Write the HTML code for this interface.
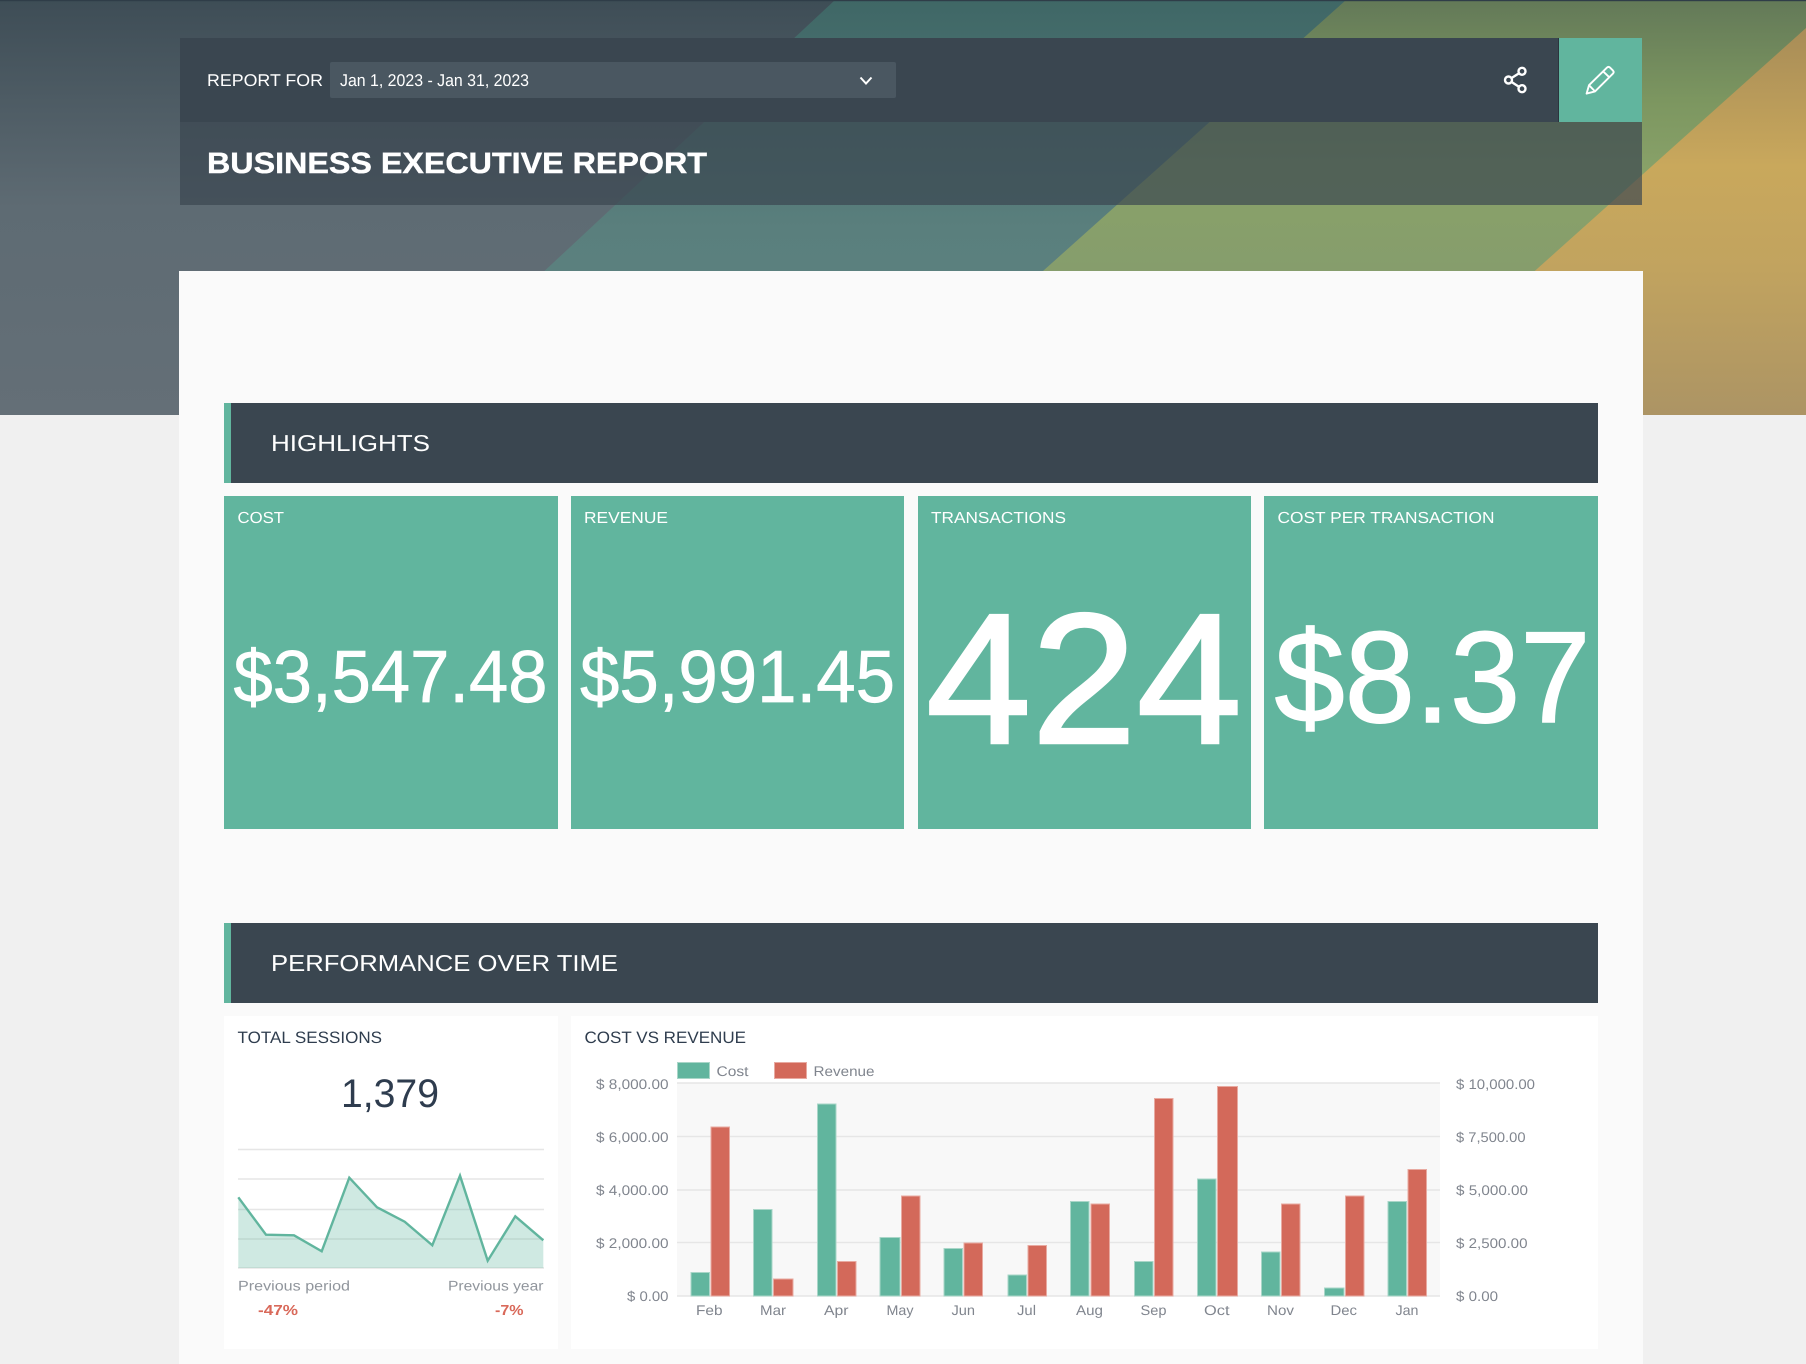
<!DOCTYPE html>
<html lang="en"><head><meta charset="utf-8"><title>Business Executive Report</title>
<style>
html,body{margin:0;padding:0;width:1806px;height:1364px;overflow:hidden;background:#f0f0f0}
svg{display:block}
text{font-family:"Liberation Sans",Arial,sans-serif;text-rendering:geometricPrecision}
.w{fill:#fff}
.lab{fill:#fff;font-size:16px}
.dk{fill:#2f3d4e;font-size:16.5px}
.ax{fill:#80858e;font-size:14px}
.c{fill:#61b59e;stroke:#a9d6c8;stroke-width:1}
.r{fill:#d3695a;stroke:#e8aaa1;stroke-width:1}
.g{stroke:#e6e6e6;stroke-width:1.5;fill:none}
</style></head><body>
<svg xmlns="http://www.w3.org/2000/svg" width="1806" height="1364" viewBox="0 0 1806 1364">
<defs>
<linearGradient id="s" gradientUnits="userSpaceOnUse" x1="0" y1="0" x2="0" y2="415"><stop offset="0" stop-color="#3e4d56"/><stop offset=".5" stop-color="#5e6b73"/><stop offset="1" stop-color="#646f77"/></linearGradient>
<linearGradient id="t" gradientUnits="userSpaceOnUse" x1="0" y1="0" x2="0" y2="415"><stop offset="0" stop-color="#3f6766"/><stop offset=".55" stop-color="#5a7f7d"/><stop offset="1" stop-color="#5f8482"/></linearGradient>
<linearGradient id="n" gradientUnits="userSpaceOnUse" x1="0" y1="0" x2="0" y2="415"><stop offset="0" stop-color="#637958"/><stop offset=".24" stop-color="#7c9660"/><stop offset=".42" stop-color="#89a269"/><stop offset=".65" stop-color="#869d6c"/><stop offset="1" stop-color="#8aa26e"/></linearGradient>
<linearGradient id="o" gradientUnits="userSpaceOnUse" x1="0" y1="0" x2="0" y2="415"><stop offset="0" stop-color="#a48c58"/><stop offset=".1" stop-color="#ab8f58"/><stop offset=".4" stop-color="#c9a85c"/><stop offset=".65" stop-color="#c1a35f"/><stop offset="1" stop-color="#ac9464"/></linearGradient>
</defs>
<!-- hero -->
<rect width="1806" height="415" fill="url(#s)"/>
<polygon points="835,0 1806,0 1806,415 390,415" fill="url(#t)"/>
<polygon points="1346,0 1806,0 1806,415 882,415" fill="url(#n)"/>
<polygon points="1806,28 1374,415 1806,415" fill="url(#o)"/>
<rect width="1806" height="1.2" fill="#2f3d48"/>
<!-- header panel -->
<rect x="180" y="122" width="1462" height="83" fill="#3a4650" fill-opacity=".69"/>
<rect x="180" y="38" width="1379" height="84" fill="#3a4650"/>
<rect x="1558" y="38" width="1" height="84" fill="#2b353e"/>
<rect x="1559" y="38" width="83" height="84" fill="#61b59e"/>
<text x="207" y="86" class="w" font-size="17" textLength="116" lengthAdjust="spacingAndGlyphs">REPORT FOR</text>
<rect x="330" y="62" width="566" height="36" rx="2" fill="#4a5761"/>
<text x="340" y="86" class="w" font-size="17" textLength="189" lengthAdjust="spacingAndGlyphs">Jan 1, 2023 - Jan 31, 2023</text>
<path d="M860.5 77.5 L866 83.5 L871.5 77.5" fill="none" stroke="#fff" stroke-width="2"/>
<text x="207" y="173" class="w" font-size="29.5" font-weight="700" stroke="#fff" stroke-width=".4" textLength="500" lengthAdjust="spacingAndGlyphs">BUSINESS EXECUTIVE REPORT</text>
<g fill="none" stroke="#fff" stroke-width="2.4">
<circle cx="1522" cy="71.3" r="3.5"/><circle cx="1508.5" cy="80" r="3.5"/><circle cx="1522" cy="88.7" r="3.5"/>
<path d="M1511.6 78 L1518.9 73.4 M1511.6 82 L1518.9 86.7"/>
</g>
<g fill="none" stroke="#fff" stroke-width="1.9" stroke-linejoin="round">
<path d="M1586.6 93.6 L1589 85.2 L1607 67.6 Q1608.5 66.2 1610 67.6 L1613 70.6 Q1614.4 72.1 1613 73.6 L1595 91.4 Z"/>
<path d="M1603.2 71.4 L1609.6 77.6 M1589 85.2 L1595 91.4"/>
</g>
<!-- body -->
<rect x="179" y="271" width="1464" height="1093" fill="#fafafa"/>
<!-- highlights -->
<rect x="224" y="403" width="1374" height="80" fill="#3a4650"/>
<rect x="224" y="403" width="7" height="80" fill="#61b59e"/>
<text x="271" y="451" class="w" font-size="23" textLength="159" lengthAdjust="spacingAndGlyphs">HIGHLIGHTS</text>
<g fill="#61b59e">
<rect x="224" y="496" width="334" height="333"/>
<rect x="571" y="496" width="333" height="333"/>
<rect x="918" y="496" width="333" height="333"/>
<rect x="1264" y="496" width="334" height="333"/>
</g>
<text x="237.5" y="523" class="lab" textLength="46.5" lengthAdjust="spacingAndGlyphs">COST</text>
<text x="584" y="523" class="lab" textLength="84" lengthAdjust="spacingAndGlyphs">REVENUE</text>
<text x="931" y="523" class="lab" textLength="135" lengthAdjust="spacingAndGlyphs">TRANSACTIONS</text>
<text x="1277.5" y="523" class="lab" textLength="217" lengthAdjust="spacingAndGlyphs">COST PER TRANSACTION</text>
<text x="233.5" y="702" class="w" font-size="74" stroke="#fff" stroke-width=".7" textLength="314" lengthAdjust="spacingAndGlyphs">$3,547.48</text>
<text x="580" y="702" class="w" font-size="74" stroke="#fff" stroke-width=".7" textLength="315" lengthAdjust="spacingAndGlyphs">$5,991.45</text>
<text x="926" y="743" class="w" font-size="186" stroke="#fff" stroke-width="2.4" textLength="316" lengthAdjust="spacingAndGlyphs">424</text>
<text x="1274.5" y="722" class="w" font-size="130" stroke="#fff" stroke-width="1.4" textLength="316" lengthAdjust="spacingAndGlyphs">$8.37</text>
<!-- performance -->
<rect x="224" y="923" width="1374" height="80" fill="#3a4650"/>
<rect x="224" y="923" width="7" height="80" fill="#61b59e"/>
<text x="271" y="971" class="w" font-size="23" textLength="347" lengthAdjust="spacingAndGlyphs">PERFORMANCE OVER TIME</text>
<rect x="224" y="1016" width="334" height="333" fill="#fff"/>
<rect x="571" y="1016" width="1027" height="333" fill="#fff"/>
<!-- sessions -->
<text x="237.5" y="1043" class="dk" textLength="144.5" lengthAdjust="spacingAndGlyphs">TOTAL SESSIONS</text>
<text x="341" y="1107" fill="#2e3c4e" font-size="40" textLength="98" lengthAdjust="spacingAndGlyphs">1,379</text>
<path class="g" d="M238 1149.5H544M238 1179H544M238 1209.5H544M238 1239H544M238 1268H544"/>
<polygon points="238.3,1197.3 266,1234.7 294,1235.3 321.7,1251.3 349.3,1177.7 377,1207.3 404.7,1221.7 432.3,1245.3 460,1175.7 487.7,1260.7 515.3,1216.3 543.3,1240.3 543.3,1268 238.3,1268" fill="#61b59e" fill-opacity=".3"/>
<polyline points="238.3,1197.3 266,1234.7 294,1235.3 321.7,1251.3 349.3,1177.7 377,1207.3 404.7,1221.7 432.3,1245.3 460,1175.7 487.7,1260.7 515.3,1216.3 543.3,1240.3" fill="none" stroke="#61b59e" stroke-width="2.4"/>
<text x="238" y="1290.5" fill="#90959c" font-size="14" textLength="112" lengthAdjust="spacingAndGlyphs">Previous period</text>
<text x="448" y="1290.5" fill="#90959c" font-size="14" textLength="95.5" lengthAdjust="spacingAndGlyphs">Previous year</text>
<text x="258" y="1315" fill="#d9695a" font-size="14.5" font-weight="700" textLength="40" lengthAdjust="spacingAndGlyphs">-47%</text>
<text x="495" y="1315" fill="#d9695a" font-size="14.5" font-weight="700" textLength="28.5" lengthAdjust="spacingAndGlyphs">-7%</text>
<!-- cost vs revenue -->
<text x="584.5" y="1043" class="dk" textLength="161.5" lengthAdjust="spacingAndGlyphs">COST VS REVENUE</text>
<rect x="677.5" y="1062.5" width="32" height="16" class="c"/>
<text x="716.5" y="1076" class="ax" textLength="32" lengthAdjust="spacingAndGlyphs">Cost</text>
<rect x="774.5" y="1062.5" width="32" height="16" class="r"/>
<text x="813.5" y="1076" class="ax" textLength="61" lengthAdjust="spacingAndGlyphs">Revenue</text>
<rect x="677" y="1083" width="763" height="213" fill="#f8f8f8"/>
<path class="g" d="M677 1083H1440M677 1136.5H1440M677 1190H1440M677 1242.5H1440M677 1296H1440"/>
<g class="ax">
<text x="596" y="1089" textLength="72.5" lengthAdjust="spacingAndGlyphs">$ 8,000.00</text>
<text x="596" y="1142" textLength="72.5" lengthAdjust="spacingAndGlyphs">$ 6,000.00</text>
<text x="596" y="1195" textLength="72.5" lengthAdjust="spacingAndGlyphs">$ 4,000.00</text>
<text x="596" y="1248" textLength="72.5" lengthAdjust="spacingAndGlyphs">$ 2,000.00</text>
<text x="627" y="1301" textLength="41.5" lengthAdjust="spacingAndGlyphs">$ 0.00</text>
<text x="1456" y="1089" textLength="79" lengthAdjust="spacingAndGlyphs">$ 10,000.00</text>
<text x="1456" y="1142" textLength="69.5" lengthAdjust="spacingAndGlyphs">$ 7,500.00</text>
<text x="1456" y="1195" textLength="72" lengthAdjust="spacingAndGlyphs">$ 5,000.00</text>
<text x="1456" y="1248" textLength="71.5" lengthAdjust="spacingAndGlyphs">$ 2,500.00</text>
<text x="1456" y="1301" textLength="42" lengthAdjust="spacingAndGlyphs">$ 0.00</text>
<text x="696" y="1315" textLength="26.5" lengthAdjust="spacingAndGlyphs">Feb</text>
<text x="760" y="1315" textLength="26" lengthAdjust="spacingAndGlyphs">Mar</text>
<text x="824" y="1315" textLength="24.5" lengthAdjust="spacingAndGlyphs">Apr</text>
<text x="886.5" y="1315" textLength="27" lengthAdjust="spacingAndGlyphs">May</text>
<text x="951.5" y="1315" textLength="23.5" lengthAdjust="spacingAndGlyphs">Jun</text>
<text x="1017" y="1315" textLength="19" lengthAdjust="spacingAndGlyphs">Jul</text>
<text x="1076" y="1315" textLength="27" lengthAdjust="spacingAndGlyphs">Aug</text>
<text x="1140.5" y="1315" textLength="26" lengthAdjust="spacingAndGlyphs">Sep</text>
<text x="1204" y="1315" textLength="25.5" lengthAdjust="spacingAndGlyphs">Oct</text>
<text x="1267" y="1315" textLength="27" lengthAdjust="spacingAndGlyphs">Nov</text>
<text x="1330.5" y="1315" textLength="26.5" lengthAdjust="spacingAndGlyphs">Dec</text>
<text x="1395.5" y="1315" textLength="23" lengthAdjust="spacingAndGlyphs">Jan</text>
</g>
<g>
<rect class="c" x="691" y="1272.5" width="18.5" height="23.5"/><rect class="r" x="711" y="1127" width="18.5" height="169"/>
<rect class="c" x="753.5" y="1209.5" width="18.5" height="86.5"/><rect class="r" x="773.5" y="1279" width="19.5" height="17"/>
<rect class="c" x="817.5" y="1104" width="18.5" height="192"/><rect class="r" x="837.5" y="1261.5" width="18.5" height="34.5"/>
<rect class="c" x="880" y="1237.5" width="20" height="58.5"/><rect class="r" x="901.5" y="1196" width="18.5" height="100"/>
<rect class="c" x="944" y="1248.5" width="18.5" height="47.5"/><rect class="r" x="964" y="1243" width="18.5" height="53"/>
<rect class="c" x="1008" y="1275" width="18.5" height="21"/><rect class="r" x="1028" y="1245.5" width="18.5" height="50.5"/>
<rect class="c" x="1070.5" y="1201.5" width="18.5" height="94.5"/><rect class="r" x="1091" y="1204" width="18.5" height="92"/>
<rect class="c" x="1134.5" y="1261.5" width="18.5" height="34.5"/><rect class="r" x="1154.5" y="1098.5" width="18.5" height="197.5"/>
<rect class="c" x="1197.5" y="1179" width="18.5" height="117"/><rect class="r" x="1217.5" y="1086.5" width="20" height="209.5"/>
<rect class="c" x="1261.5" y="1252" width="18.5" height="44"/><rect class="r" x="1281.5" y="1204" width="18.5" height="92"/>
<rect class="c" x="1324.5" y="1288" width="19.5" height="8"/><rect class="r" x="1345.5" y="1196" width="18.5" height="100"/>
<rect class="c" x="1388" y="1201.5" width="18.5" height="94.5"/><rect class="r" x="1408" y="1169.5" width="18.5" height="126.5"/>
</g>
</svg>
</body></html>
